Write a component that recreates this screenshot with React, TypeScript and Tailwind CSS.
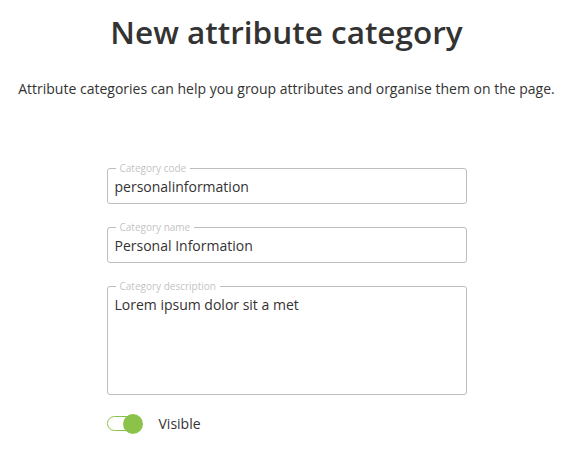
import React from "react";

type Field = {
    label: string;
    value: string;
    multiline?: boolean;
};

const fields: Field[] = [
    { label: "Category code", value: "personalinformation" },
    { label: "Category name", value: "Personal Information" },
    { label: "Category description", value: "Lorem ipsum dolor sit a met", multiline: true },
];

function OutlinedField({ label, value, multiline }: Field): JSX.Element {
    return (
        <fieldset
            className={
                "border border-[#bdbdbd] rounded-[3px] pl-[7px] pr-2 m-0 " +
                (multiline ? "h-[114px]" : "h-[41px]")
            }
        >
            <legend className="px-[4px] ml-[1px] text-[10px] leading-[10px] text-[#c4c4c4]">
                {label}
            </legend>
            <div className="text-[14px] leading-[18px] text-[#333] mt-[5px]">{value}</div>
        </fieldset>
    );
}

export default function App(): JSX.Element {
    return (
        <div
            className="w-[573px] h-[451px] bg-white flex flex-col items-center overflow-hidden"
            style={{ fontFamily: '"Open Sans", sans-serif' }}
        >
            <h1 className="mt-[8px] text-[31.5px] leading-[48px] font-semibold text-[#333]">
                New attribute category
            </h1>
            <p className="mt-[23px] text-[14px] leading-[20px] text-[#333]">
                Attribute categories can help you group attributes and organise them on the page.
            </p>
            <div className="mt-[64px] w-[360px] flex flex-col gap-[18px]">
                {fields.map((f, index) => (
                    <OutlinedField key={index} {...f} />
                ))}
            </div>
            <div className="w-[360px] mt-[18px] flex items-center gap-[16px]">
                <div className="relative w-[36px] h-[20px] flex items-center">
                    <div className="w-[34px] h-[15px] rounded-full border border-[#8bc34a] bg-white" />
                    <div className="absolute right-0 top-0 w-[20px] h-[20px] rounded-full bg-[#8bc34a]" />
                </div>
                <span className="text-[14px] text-[#333]">Visible</span>
            </div>
        </div>
    );
}
